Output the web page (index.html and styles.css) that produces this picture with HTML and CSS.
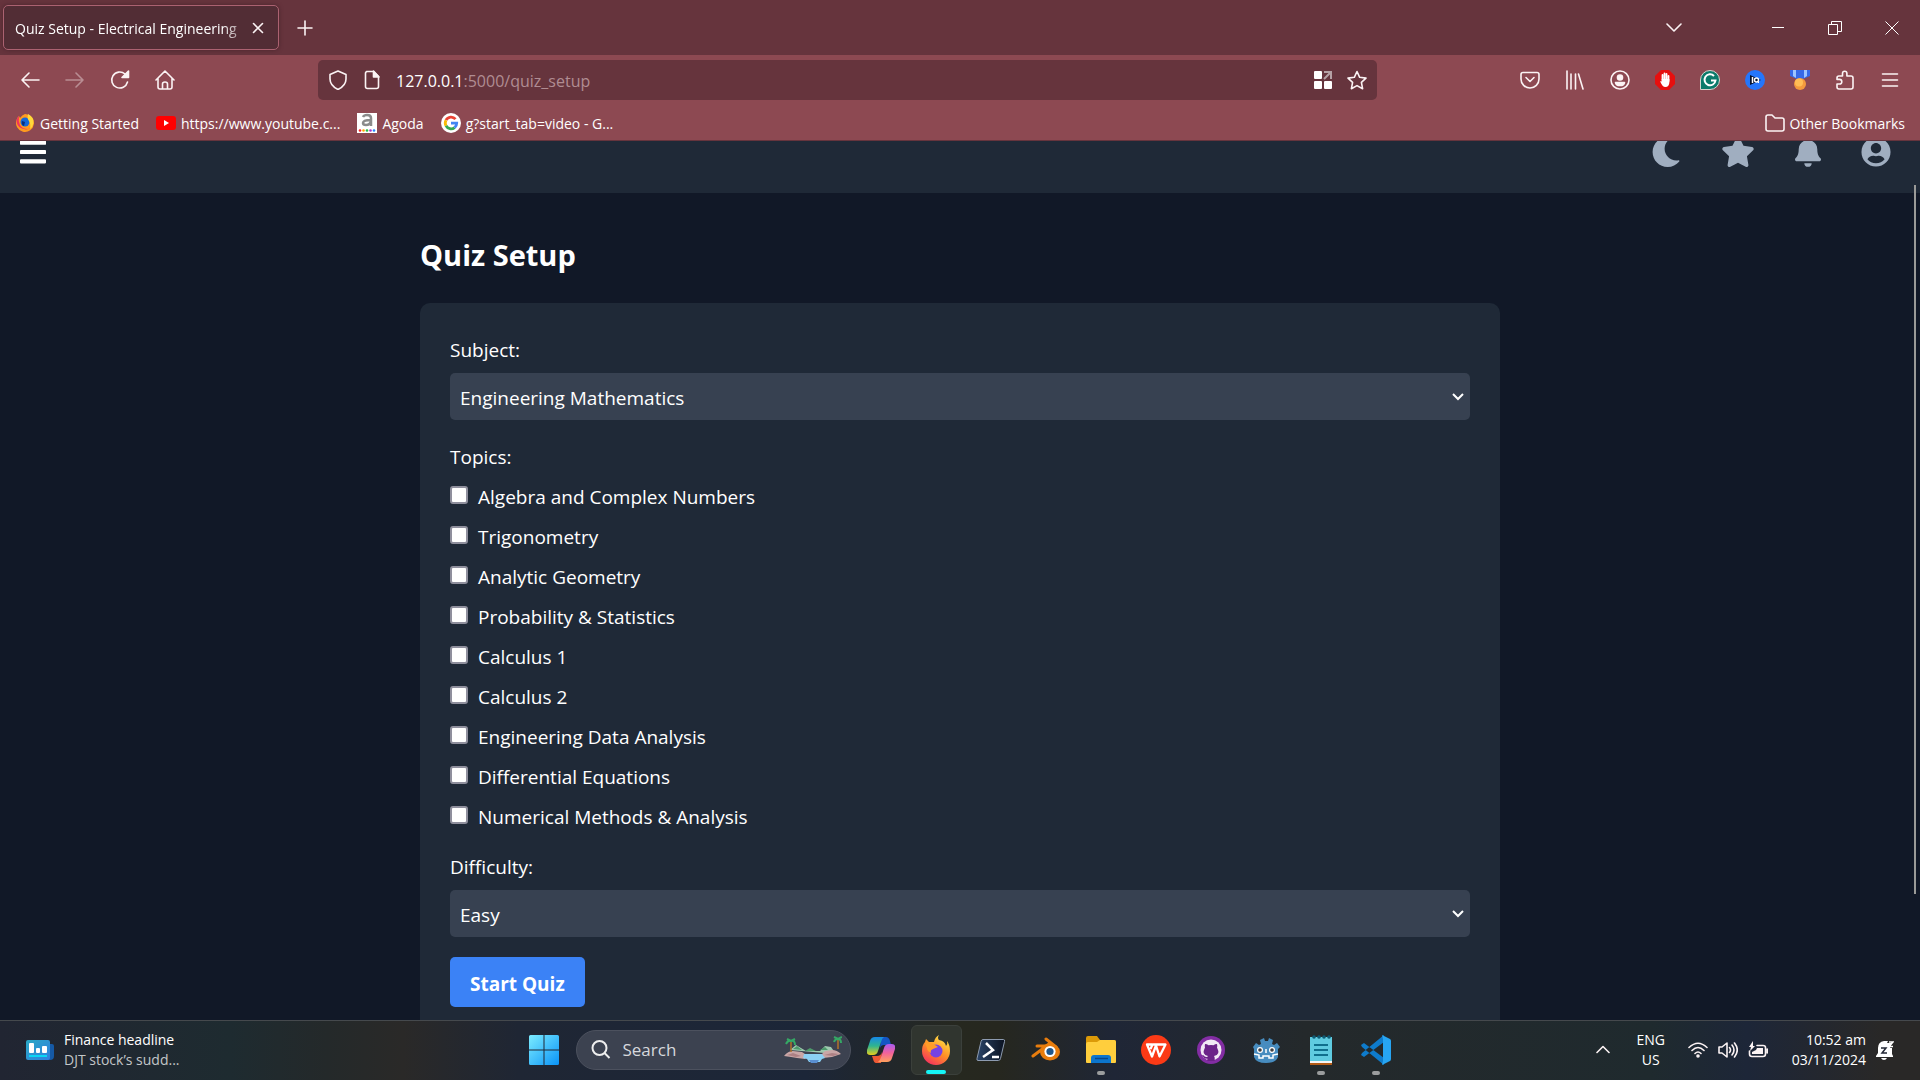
FILE: index.html
```html
<!DOCTYPE html>
<html lang="en">
<head>
<meta charset="utf-8">
<title>Quiz Setup - Electrical Engineering</title>
<link rel="stylesheet" href="styles.css">
</head>
<body>
<div class="desktop">
  <header class="browser">
    <div class="tabstrip">
      <div class="tab">
        <span class="tab-title">Quiz Setup - Electrical Engineering</span>
        <button class="tab-close" aria-label="Close tab"><svg class="line" width="12" height="12" viewBox="0 0 12 12"><path d="M1.500 1.500l9 9M10.500 1.500l-9 9"/></svg></button>
      </div>
      <button class="newtab" aria-label="New tab"><svg class="line" width="16" height="16" viewBox="0 0 16 16"><path d="M8 1v14M1 8h14"/></svg></button>
      <div class="window-controls">
        <button class="list-tabs" aria-label="List all tabs"><svg class="line" width="18" height="10" viewBox="0 0 18 10"><path d="M2 1l7 7 7-7"/></svg></button>
        <button aria-label="Minimize"><svg class="hair" width="14" height="14" viewBox="0 0 14 14"><path d="M1 6.5h12"/></svg></button>
        <button aria-label="Restore"><svg class="hair" width="14" height="14" viewBox="0 0 14 14"><path d="M.5 3.500h9v10h-9zM3.500 3.500v-3h10v10h-4"/></svg></button>
        <button aria-label="Close window"><svg class="hair" width="14" height="14" viewBox="0 0 14 14"><path d="M.5.5l13 13M13.500.5l-13 13"/></svg></button>
      </div>
    </div>
    <div class="toolbar">
      <nav class="tools">
        <button aria-label="Back"><svg class="line" width="20" height="20" viewBox="0 0 20 20"><path d="M19 10H2M9 3l-7 7 7 7"/></svg></button>
        <button aria-label="Forward" disabled><svg class="line" width="20" height="20" viewBox="0 0 20 20"><path d="M1 10h17M11 3l7 7-7 7"/></svg></button>
        <button aria-label="Reload"><svg class="line" width="20" height="20" viewBox="0 0 20 20"><path d="M17.500 12a8 8 0 1 1-2.500-8"/><path class="solid" d="M18.500 1v6.500H12z"/></svg></button>
        <button aria-label="Home"><svg class="line" width="20" height="20" viewBox="0 0 20 20"><path d="M1 10l9-9 9 9M3 8.500V17q0 2 2 2h10q2 0 2-2V8.500M7.500 18.500V14q0-2 2.500-2t2.500 2v4.500"/></svg></button>
      </nav>
      <div class="urlbar">
        <svg class="line" width="20" height="20" viewBox="0 0 20 20"><path d="M10 1l8 3.500V9c0 5-3 8-8 10.500C5 17 2 14 2 9V4.500z"/></svg>
        <svg class="line" width="20" height="20" viewBox="0 0 20 20"><path d="M4.500 1.500h7l5 5v10q0 2-2 2h-9q-2 0-2-2v-13q0-2 2-2z"/><path class="solid" d="M11.500 1v6H17z"/></svg>
        <div class="url"><b>127.0.0.1</b>:5000/quiz_setup</div>
        <svg width="20" height="20" viewBox="0 0 20 20" fill="#fff"><rect x="1" y="1" width="8" height="8" rx="1"/><rect x="1" y="11" width="8" height="8" rx="1"/><rect x="11" y="11" width="8" height="8" rx="1"/><path fill="none" stroke="#b5a0a4" stroke-width="2" d="M11 2h7v7M18 2l-7 7"/></svg>
        <svg class="line" width="20" height="20" viewBox="0 0 20 20"><path d="M10 1.500l2.700 5.800 6.300.8-4.600 4.300 1.200 6.300-5.600-3.100-5.600 3.100 1.200-6.300L1 8.100l6.300-.8z"/></svg>
      </div>
      <div class="tools">
        <button aria-label="Save to Pocket"><svg class="line" width="20" height="20" viewBox="0 0 20 20"><path d="M3 2.500h14q2 0 2 2V9a9 9 0 0 1-18 0V4.500q0-2 2-2z"/><path d="M6 7.500l4 4 4-4"/></svg></button>
        <button aria-label="Library"><svg class="line" width="20" height="20" viewBox="0 0 20 20"><path d="M2 1v18M6 4v15M10.500 4v15M13.500 4l4.500 15"/></svg></button>
        <button aria-label="Account"><svg class="line" width="20" height="20" viewBox="0 0 20 20"><circle cx="10" cy="10" r="9"/><circle class="solid" cx="10" cy="7.500" r="2.500"/><path class="solid" d="M5.500 12.500h9q-.5 3-4.500 3t-4.500-3z"/></svg></button>
        <button aria-label="Ad blocker"><svg width="20" height="20" viewBox="0 0 20 20"><path fill="#e60f0f" d="M6 0h8l6 6v8l-6 6H6l-6-6V6z"/><path d="M7.500 11V5M9.500 10V3.500M11.500 10V4M13.500 11V6" stroke="#fff" stroke-width="1.800" stroke-linecap="round"/><path fill="#fff" d="M6.600 9h7.800v3c0 3-1.500 5-4 5-2.200 0-3.500-1.500-5.200-5.500q1-1 2 .5z"/></svg></button>
        <button aria-label="Grammar checker"><svg width="20" height="20" viewBox="0 0 20 20"><path fill="#0b7a6b" stroke="#d5d5cf" d="M.5 19.500V10A9.500 9.500 0 1 1 10 19.500z"/><path fill="none" stroke="#fff" stroke-width="2" d="M14 6a5.500 5.500 0 1 0 1.500 4.500H11"/></svg></button>
        <button aria-label="IQ"><svg width="20" height="20" viewBox="0 0 20 20"><circle cx="10" cy="10" r="10" fill="#2476fb"/><path fill="#07122b" d="M5 5l11 5-11 5z"/><path stroke="#fff" stroke-width="1.500" fill="none" d="M7.500 7v6"/><circle cx="11.500" cy="10" r="2" fill="#07122b" stroke="#fff" stroke-width="1.500"/><path d="M12 11l2 2" stroke="#fff"/></svg></button>
        <button aria-label="Rewards"><svg width="20" height="20" viewBox="0 0 20 20"><path fill="#3769e7" d="M0 0h20v6l-7 3H7L0 6z"/><path fill="#9dc4ff" d="M3 0h3v8L3 6zM14 0h3v6l-3 2z"/><circle cx="10" cy="14" r="6" fill="#f49a3d"/><circle cx="9" cy="12.500" r="4" fill="#ffbd55"/></svg></button>
        <button aria-label="Extensions"><svg class="line" width="20" height="20" viewBox="0 0 20 20"><path d="M7.500 6V3.500a2.200 2.200 0 0 1 4.400 0V6H16q2 0 2 2v9q0 2-2 2H4q-2 0-2-2v-3h2.500a2.300 2.300 0 0 0 0-4.600H2V8q0-2 2-2z"/></svg></button>
        <button aria-label="Menu"><svg class="line" width="20" height="20" viewBox="0 0 20 20"><path d="M2.500 4h15M2.500 10h15M2.500 16h15"/></svg></button>
      </div>
    </div>
    <nav class="bookmarks">
      <a href="#"><svg width="20" height="20" viewBox="0 0 20 20"><path fill="#ff9a1f" d="M10 1a9 9 0 1 1-8.500 6q1-3 2.500-4l1 2q2-3 5-4z"/><path fill="#f0345e" d="M1.500 7q1-3 2.500-4-1 5 1 9t8 4q2-.5 4-2.500A9 9 0 0 1 1.500 7z"/><circle cx="10" cy="9" r="4.500" fill="#1367d8"/><path fill="#ffd93b" d="M13 1q6 3 5.500 9-.5 4-3.500 6 1-5-1-8-2-2-1-7z"/><path fill="#0a2d7c" d="M7 8l3 1-1 4q-3-1-2-5z"/></svg><span>Getting Started</span></a>
      <a href="#"><svg width="20" height="20" viewBox="0 0 20 20"><rect y="3" width="20" height="14" rx="3" fill="#f00"/><path fill="#fff" d="M8 7l5 3-5 3z"/></svg><span>https://www.youtube.c...</span></a>
      <a href="#"><svg width="20" height="20" viewBox="0 0 20 20"><path fill="#fff" d="M0 0h20v20H0z"/><path fill="none" stroke="#8b8b8b" stroke-width="2.500" d="M6 4q1-2 4-2 4 0 4 3v8M14 7q-8 0-8 3 0 2 3 2 4 0 5-4"/><g><circle cx="3" cy="17.500" r="1.300" fill="#f22"/><circle cx="6.500" cy="17.500" r="1.300" fill="#fa0"/><circle cx="10" cy="17.500" r="1.300" fill="#2b4"/><circle cx="13.500" cy="17.500" r="1.300" fill="#a3c"/><circle cx="17" cy="17.500" r="1.300" fill="#28f"/></g></svg><span>Agoda</span></a>
      <a href="#"><svg width="20" height="20" viewBox="0 0 20 20"><circle cx="10" cy="10" r="10" fill="#fff"/><g fill="none" stroke-width="2.800"><path stroke="#ea4335" d="M14.500 6.200A5.800 5.800 0 0 0 5 7.200"/><path stroke="#fbbc05" d="M5 7.200a5.800 5.800 0 0 0 0 5.600"/><path stroke="#34a853" d="M5 12.800a5.800 5.800 0 0 0 8.600 1.800"/><path stroke="#4285f4" d="M13.600 14.600A5.800 5.800 0 0 0 15.700 10.200H10"/></g></svg><span>g?start_tab=video - G...</span></a>
      <a href="#" class="other"><svg class="line" width="20" height="20" viewBox="0 0 20 20"><path d="M1 4q0-2 2-2h4l3 3h7q2 0 2 2v9q0 2-2 2H3q-2 0-2-2z"/></svg><span>Other Bookmarks</span></a>
    </nav>
  </header>

  <div class="page">
    <header class="site-header">
      <button aria-label="Open menu"><svg width="26" height="30" viewBox="0 0 448 512" fill="#fff"><path d="M16 132h416c9 0 16-7 16-16V76c0-9-7-16-16-16H16C7 60 0 67 0 76v40c0 9 7 16 16 16zm0 160h416c9 0 16-7 16-16v-40c0-9-7-16-16-16H16c-9 0-16 7-16 16v40c0 9 7 16 16 16zm0 160h416c9 0 16-7 16-16v-40c0-9-7-16-16-16H16c-9 0-16 7-16 16v40c0 9 7 16 16 16z"/></svg></button>
      <nav class="site-icons">
        <button aria-label="Dark mode"><svg width="30" height="30" viewBox="0 0 512 512"><path d="M283.211 512c78.962 0 151.079-35.925 198.857-94.792 7.068-8.708-.639-21.430-11.562-19.350-124.203 23.654-238.262-71.576-238.262-196.954 0-72.222 38.662-138.635 101.498-174.394 9.686-5.512 7.250-20.197-3.756-22.230A258.156 258.156 0 0 0 283.211 0c-141.309 0-256 114.511-256 256 0 141.309 114.511 256 256 256z"/></svg></button>
        <button aria-label="Favorites"><svg width="34" height="30" viewBox="0 0 576 512"><path d="M259.300 17.800L194 150.200 47.900 171.500c-26.200 3.800-36.700 36.100-17.700 54.600l105.700 103-25 145.500c-4.500 26.300 23.200 46 46.400 33.700L288 439.600l130.700 68.700c23.200 12.200 50.900-7.400 46.400-33.700l-25-145.500 105.700-103c19-18.500 8.500-50.800-17.700-54.600L382 150.200 316.700 17.800c-11.700-23.600-45.600-23.900-57.400 0z"/></svg></button>
        <button aria-label="Notifications"><svg width="26" height="30" viewBox="0 0 448 512"><path d="M224 512c35.320 0 63.970-28.650 63.970-64H160.030c0 35.350 28.650 64 63.970 64zm215.390-149.710c-19.320-20.760-55.470-51.990-55.470-154.290 0-77.700-54.480-139.900-127.940-155.160V32c0-17.670-14.320-32-31.980-32s-31.980 14.330-31.980 32v20.840C118.560 68.100 64.080 130.300 64.080 208c0 102.300-36.150 133.530-55.470 154.290-6 6.450-8.660 14.160-8.610 21.710.11 16.400 12.980 32 32.100 32h383.800c19.120 0 32-15.600 32.100-32 .05-7.550-2.610-15.270-8.610-21.710z"/></svg></button>
        <button aria-label="Profile"><svg width="30" height="30" viewBox="0 0 496 512"><path d="M248 8C111 8 0 119 0 256s111 248 248 248 248-111 248-248S385 8 248 8zm0 96c48.600 0 88 39.400 88 88s-39.400 88-88 88-88-39.400-88-88 39.400-88 88-88zm0 344c-58.700 0-111.300-26.600-146.500-68.200 18.800-35.400 55.600-59.800 98.500-59.800 2.400 0 4.800.4 7.100 1.100 13 4.200 26.600 6.900 40.900 6.900 14.300 0 28-2.700 40.900-6.900 2.300-.7 4.700-1.100 7.100-1.100 42.900 0 79.700 24.400 98.500 59.800C359.300 421.400 306.700 448 248 448z"/></svg></button>
      </nav>
    </header>
    <main class="content">
      <h1>Quiz Setup</h1>
      <form class="card">
        <label class="field-label" for="subject">Subject:</label>
        <div class="select"><select id="subject"><option>Engineering Mathematics</option></select><svg width="12" height="8" viewBox="0 0 12 8"><path d="M1 1l5 5 5-5"/></svg></div>
        <fieldset>
          <legend class="field-label">Topics:</legend>
          <label class="topic"><input type="checkbox"><span>Algebra and Complex Numbers</span></label>
          <label class="topic"><input type="checkbox"><span>Trigonometry</span></label>
          <label class="topic"><input type="checkbox"><span>Analytic Geometry</span></label>
          <label class="topic"><input type="checkbox"><span>Probability &amp; Statistics</span></label>
          <label class="topic"><input type="checkbox"><span>Calculus 1</span></label>
          <label class="topic"><input type="checkbox"><span>Calculus 2</span></label>
          <label class="topic"><input type="checkbox"><span>Engineering Data Analysis</span></label>
          <label class="topic"><input type="checkbox"><span>Differential Equations</span></label>
          <label class="topic"><input type="checkbox"><span>Numerical Methods &amp; Analysis</span></label>
        </fieldset>
        <label class="field-label" for="difficulty">Difficulty:</label>
        <div class="select"><select id="difficulty"><option>Easy</option></select><svg width="12" height="8" viewBox="0 0 12 8"><path d="M1 1l5 5 5-5"/></svg></div>
        <button class="start" type="button">Start Quiz</button>
      </form>
    </main>
    <div class="scroll-thumb"></div>
  </div>

  <footer class="taskbar">
    <a class="widget" href="#">
      <svg width="28" height="22" viewBox="0 0 28 22"><defs><linearGradient id="fin" x2="1" y2="1"><stop stop-color="#2aa9c4"/><stop offset="1" stop-color="#2f7fe0"/></linearGradient></defs><path fill="#1559a5" d="M20 5h6q2 0 2 2v10q0 4-4 4h-4z"/><rect y="1" width="24" height="20" rx="2" fill="url(#fin)"/><g fill="#fff"><rect x="3" y="4" width="5" height="10" rx="1"/><rect x="10" y="9" width="4" height="5" rx="1"/><rect x="16" y="7" width="5" height="7" rx="1"/></g><path fill="#0ad7f5" d="M3 16h18v2H3z"/></svg>
      <span class="widget-text"><span>Finance headline</span><span class="dim">DJT stock’s sudd...</span></span>
    </a>
    <div class="apps">
      <button class="app" aria-label="Start"><svg width="30" height="30" viewBox="0 0 30 30"><defs><linearGradient id="win" x2="1" y2="1"><stop stop-color="#7cecff"/><stop offset="1" stop-color="#0a93f7"/></linearGradient></defs><path fill="url(#win)" d="M0 1.500Q0 0 1.500 0h13v14.500H0zM15.500 0h13Q30 0 30 1.500v13H15.500zM0 15.500h14.500V30h-13Q0 30 0 28.500zM15.500 15.500H30v13q0 1.500-1.500 1.500h-13z"/></svg></button>
      <button class="search">
        <svg width="20" height="20" viewBox="0 0 20 20" fill="none" stroke="#eee" stroke-width="2"><circle cx="8.500" cy="8" r="7"/><path d="M13.500 13l5 5"/></svg>
        <span>Search</span>
        <svg class="island" width="58" height="28" viewBox="0 0 58 28"><path fill="#9fc9b0" d="M6 14l6-5 5 3 5 3h14l5-5 6 1 5 7z"/><path fill="#4d9a6b" d="M9 13l4-3 5 4zM21 15l5-3 6 3zM36 14l5-3 3 3z"/><path fill="#c9a6a6" d="M0 20q4-5 9-5l9 1 6 4-3 3-8-1-6-1zM57 18q-4-4-9-4l-7 1-5 5 3 2 9-1z"/><path fill="#ad8084" d="M3 19l6-2 8 3-5 1zM40 19l8-2 7 1-6 2z"/><path fill="#8bd0f4" d="M20 18h18l3 4-3 1-2 3H25l-2-3-4-1z"/><path fill="#5a8fd0" d="M25 24h10l-2 3h-6z"/><path d="M7 16V6M54 13V4" stroke="#b17328" stroke-width="1.500"/><g fill="none" stroke="#35a865" stroke-width="2"><path d="M2 8q2-4 5-3 4-1 4 4M3 3l4 2 4-2M50 6q1-3 4-3 3 0 3 4M50 1l4 2 4-2"/></g></svg>
      </button>
      <button class="app" aria-label="Copilot"><svg width="28" height="28" viewBox="0 0 28 28"><defs><linearGradient id="cp1" x2="0" y2="1"><stop stop-color="#1688e8"/><stop offset=".5" stop-color="#2fb58e"/><stop offset="1" stop-color="#e7d01c"/></linearGradient><linearGradient id="cp2" x2="0" y2="1"><stop stop-color="#a95cf2"/><stop offset=".5" stop-color="#f2629b"/><stop offset="1" stop-color="#ffa05c"/></linearGradient></defs><path fill="#1456c4" d="M14 1h5q3 0 4 4l1 4h-7q-3 0-4 3z"/><path fill="url(#cp1)" d="M8 1h9q-2 1-3 5l-3 9q-1 4-5 4H3q-4 0-3-5l3-9q1-4 5-4z"/><path fill="#ee5a35" d="M14 27H9q-2 0-3-4l-1-3h5q4 0 5-4z"/><path fill="url(#cp2)" d="M20 26h-9q2-1 3-5l3-9q1-4 5-4h3q4 0 3 5l-3 9q-1 4-5 4z"/></svg></button>
      <button class="app active" aria-label="Firefox"><svg width="30" height="30" viewBox="0 0 30 30"><defs><linearGradient id="fx" x1=".8" x2=".2" y2="1"><stop stop-color="#ffe94a"/><stop offset=".5" stop-color="#ff9125"/><stop offset="1" stop-color="#f52a62"/></linearGradient></defs><path fill="url(#fx)" d="M18 0q-2 3 0 5 6 1 7 6 2-2 1-5 3 4 3 10a14 14 0 1 1-28 0Q1 10 4 7l1-3 3 3h5q1-5 5-7z"/><circle cx="15" cy="16" r="6.500" fill="#7542e5"/><path fill="#ff9c28" d="M4 8l4 0 6 2 3 2-5 2q-3 1-2 4-4-2-4-5z"/></svg></button>
      <button class="app" aria-label="PowerShell"><svg width="30" height="24" viewBox="0 0 30 24"><defs><linearGradient id="ps" x2="1"><stop stop-color="#2b4569"/><stop offset="1" stop-color="#0b1220"/></linearGradient></defs><path fill="url(#ps)" stroke="#8d9bb0" d="M7 1.500h20.500q1.500 0 1 2l-4 17q-.5 2-2 2H2q-1.500 0-1-2l4-17q.5-2 2-2z"/><path fill="none" stroke="#fff" stroke-width="2.500" d="M10 5l7 7-10 7M16 19h7"/></svg></button>
      <button class="app" aria-label="Blender"><svg width="30" height="26" viewBox="0 0 30 26"><path fill="none" stroke="#e87d0d" stroke-width="3" stroke-linecap="round" d="M6 9h12M2 19L18 7M15 2l10 8"/><ellipse cx="19" cy="15" rx="10" ry="8.500" fill="#e87d0d"/><circle cx="19" cy="14.500" r="5.600" fill="#fff"/><circle cx="19" cy="14.500" r="3.600" fill="#1d568c"/></svg></button>
      <button class="app running" aria-label="File Explorer"><svg width="30" height="28" viewBox="0 0 30 28"><path fill="#dc9a08" d="M0 2q0-2 2-2h9l3 4h14q2 0 2 2v6H0z"/><path fill="#ffce3d" d="M0 8q0-2 2-2h9l3-2h14q2 0 2 2v20q0 1-1 1H1q-1 0-1-1z"/><path fill="#0c75cd" d="M5 27v-5q0-3 3-3h14q3 0 3 3v5z"/><path stroke="#07468a" stroke-width="1.500" d="M9 22.500h13"/></svg></button>
      <button class="app" aria-label="WPS Office"><svg width="30" height="30" viewBox="0 0 30 30"><circle cx="15" cy="15" r="15" fill="#fb3a16"/><path fill="none" stroke="#fff" stroke-width="2.300" stroke-linejoin="round" d="M11 9.500H6l5 12 4-11 3.500 11 6-12H15.500M9.500 14l2-4.500h4"/></svg></button>
      <button class="app" aria-label="GitHub Desktop"><svg width="28" height="28" viewBox="0 0 28 28"><circle cx="14" cy="14" r="14" fill="#832da4"/><circle cx="14" cy="14" r="10.500" fill="#f2e9f5"/><path fill="#6c2389" d="M8 8q2 0 3.500 1.300 2.500-.5 5 0Q18 8 20 8q.6 2 0 3.500 4 7.500-3 8.500.7 1 .7 2v3h-7.400v-2.500q-3.500.7-4.500-2.300l-1.300-1 2 0q1.500 2.500 3.900 1.500L11 20q-7-1-3-8.500Q7.500 10 8 8z"/></svg></button>
      <button class="app" aria-label="Godot"><svg width="28" height="28" viewBox="0 0 28 28"><path fill="#478cbf" d="M1 11l3-4 3 2 2-1-1-4 4-2 1 3h3l1-3 4 2-1 4 2 1 3-2 3 4-2 2v8q-2 6-12 6T2 21v-8z"/><circle cx="8" cy="14" r="3" fill="#fff"/><circle cx="20" cy="14" r="3" fill="#fff"/><circle cx="8" cy="14" r="1.800" fill="#414042"/><circle cx="20" cy="14" r="1.800" fill="#414042"/><path fill="none" stroke="#fff" stroke-width="1.500" d="M14 13v4M2 18l5 1v3h4v-2h6v2h4v-3l5-1"/></svg></button>
      <button class="app running" aria-label="Notepad"><svg width="22" height="30" viewBox="0 0 22 30"><path fill="#5fcbe0" d="M0 2h22v24H0z"/><path fill="#f5f5f5" d="M0 26h22v2H0z"/><path fill="#b35b16" d="M0 28h22v2H0z"/><g fill="#0e5a73"><circle cx="4" cy="2" r="1.800"/><circle cx="9" cy="2" r="1.800"/><circle cx="14" cy="2" r="1.800"/><circle cx="19" cy="2" r="1.800"/></g><path stroke="#0f6f8c" stroke-width="2" d="M4 10h14M4 15h14M4 20h14"/></svg></button>
      <button class="app running" aria-label="Visual Studio Code"><svg width="30" height="30" viewBox="0 0 30 30"><path fill="#0e7bcb" d="M0 10l3-2 20 15v7L1 12zM0 20l3 2L23 7V0L1 18z"/><path fill="#27a5f2" d="M21 0l8 4q1 .5 1 2v18q0 1.500-1 2l-8 4 1-4V4z"/></svg></button>
    </div>
    <div class="tray">
      <svg class="line" width="14" height="9" viewBox="0 0 14 9"><path d="M1 7.500l6-6 6 6"/></svg>
      <div class="lang"><span>ENG</span><span>US</span></div>
      <div class="status">
        <svg class="line" width="20" height="18" viewBox="0 0 20 18"><path d="M1 6.500q9-8.500 18 0M4 9.500q6-6 12 0M7 12.500q3-3 6 0"/><circle class="solid" cx="10" cy="15" r="1"/></svg>
        <svg class="line" width="20" height="18" viewBox="0 0 20 18"><path d="M1 6h3l5-4v14l-5-4H1zM11.500 6.500q2 2.500 0 5M14 4q4 5 0 10M16.500 2q5.500 7 0 14"/></svg>
        <svg class="line" width="20" height="18" viewBox="0 0 20 18"><path d="M9 4.500h6q2.500 0 2.500 2V13q0 2.500-2.500 2.500H4q-2.500 0-2.500-2.500v-3M19.200 8v4"/><path fill="#fbf3f4" stroke="none" d="M9 7h6v6H4v-2l4-2z"/><path fill="#fbf3f4" stroke="none" d="M5 0L1 6h2L2 10l5-5H5z"/></svg>
      </div>
      <div class="clock"><span>10:52 am</span><span>03/11/2024</span></div>
      <svg width="18" height="20" viewBox="0 0 18 20"><path fill="#fff" d="M8 1h4l-1 2h5L14 8h2v6l1 2v1H0v-1l2-3V8q0-6 6-7zM5 18h6q-1 2-3 2t-3-2z"/><path fill="none" stroke="#222735" stroke-width="1.500" d="M5 8h5l-4 5h5"/><path fill="none" stroke="#fff" stroke-width="1.500" d="M13 2h4l-4 4.500h4"/></svg>
    </div>
  </footer>
</div>
</body>
</html>
```
FILE: styles.css
```css
* { box-sizing: border-box; }

body {
  margin: 0;
  font-family: "Open Sans", "Noto Sans", sans-serif;
  color: #fff;
  background: #111827;
}

button {
  display: flex;
  align-items: center;
  justify-content: center;
  margin: 0;
  padding: 0;
  border: 0;
  background: none;
  color: inherit;
  font: inherit;
}

a { color: inherit; text-decoration: none; }
svg { display: block; flex: none; }

.line { fill: none; stroke: #fbf3f4; stroke-width: 1.6; stroke-linecap: round; stroke-linejoin: round; }
.line .solid { fill: #fbf3f4; }
.hair { fill: none; stroke: #fff; stroke-width: 1; }

.desktop { display: flex; flex-direction: column; height: 100vh; overflow: hidden; }

/* Browser window */
.browser { flex: none; background: #8d4952; border-bottom: 1px solid #66343d; font-size: 14px; }
.tabstrip { display: flex; align-items: center; height: 55px; padding-left: 3px; background: #66343d; }
.tab {
  display: flex;
  align-items: center;
  justify-content: space-between;
  width: 276px;
  height: 45px;
  padding: 0 14px 0 11px;
  border: 1px solid #ab6271;
  border-radius: 5px;
  background: #522d35;
  box-shadow: 0 0 4px #4a252d;
}
.tab-title {
  width: 230px;
  padding-top: 2px;
  overflow: hidden;
  white-space: nowrap;
  mask-image: linear-gradient(to right, #000 90%, transparent 104%);
}
.newtab { width: 52px; height: 45px; }
.window-controls { display: flex; margin-left: auto; }
.window-controls button { width: 57px; height: 55px; }
.window-controls .list-tabs { margin-right: 47px; }

.toolbar { display: flex; align-items: center; height: 50px; padding: 0 8px 0 7px; }
.tools { display: flex; }
.tools button { width: 45px; height: 40px; }
.tools button:disabled { opacity: .4; }
.urlbar {
  display: flex;
  flex: 1;
  align-items: center;
  gap: 14px;
  height: 40px;
  margin: 0 130px 0 131px;
  padding: 0 10px;
  border-radius: 5px;
  background: #66343d;
}
.url { flex: 1; padding-top: 2px; font-size: 16px; color: #b08c92; }
.url b { font-weight: 400; color: #fff; }

.bookmarks { display: flex; gap: 17px; height: 35px; padding: 0 15px; }
.bookmarks a { display: flex; align-items: center; gap: 5px; }
.bookmarks span { padding-top: 2px; }
.bookmarks .other { margin-left: auto; }

/* Quiz page */
.page { position: relative; flex: 1; min-height: 0; overflow: hidden; }
.site-header {
  display: flex;
  align-items: flex-end;
  justify-content: space-between;
  height: 52px;
  padding: 0 29px 26px 20px;
  background: #1f2937;
}
.site-icons { display: flex; gap: 40px; fill: #a0aec0; }

.content { max-width: 1120px; margin: 0 auto; padding: 42px 20px; font-size: 19px; line-height: 26px; }
h1 { margin: 0 0 28px; font-size: 29px; font-weight: 700; line-height: 40px; }
.card { padding: 30px; border-radius: 10px; background: #1f2937; }
.field-label { display: block; margin-bottom: 10px; padding: 4px 0 0; }
.select { display: grid; align-items: center; margin-bottom: 20px; }
.select > * { grid-area: 1 / 1; }
.select select {
  width: 100%;
  height: 47px;
  padding: 2px 10px 0;
  border: 0;
  border-radius: 5px;
  appearance: none;
  background: #374151;
  color: #fff;
  font: inherit;
}
.select svg { justify-self: end; margin-right: 6px; fill: none; stroke: #fff; stroke-width: 2; pointer-events: none; }
fieldset { margin: 0 0 20px; padding: 0; border: 0; }
.topic { display: flex; align-items: center; gap: 10px; }
.topic span { padding-top: 4px; }
.topic + .topic { margin-top: 10px; }
.topic input {
  width: 18px;
  height: 18px;
  margin: 0;
  border: 2px solid #8f8f9d;
  border-radius: 3px;
  appearance: none;
  background: #fff;
}
.start { height: 50px; padding: 4px 20px 0; border-radius: 5px; background: #3b82f6; font-weight: 700; }
.scroll-thumb { position: absolute; top: 5%; right: 4px; bottom: 126px; width: 2px; background: #9a9a98; }

/* Taskbar */
.taskbar {
  display: grid;
  grid-template-columns: 1fr auto 1fr;
  align-items: center;
  flex: none;
  height: 60px;
  padding-bottom: 2px;
  border-top: 1px solid #45494d;
  background: linear-gradient(to right, #212532 0, #1e2b30 12%, #24292a 17%, #2a2928 21%, #1f2634 27%, #1c2638 42%, #26281f 50%, #26271f 52%, #1f2636 58%, #24292b 68%, #1f2a2e 86%, #1d2638 91%, #292827 98%);
  font-size: 14px;
  line-height: 20px;
}
.widget { display: flex; align-items: center; gap: 10px; padding-left: 26px; }
.widget-text, .lang, .clock { display: flex; flex-direction: column; }
.dim { color: #c3c6c8; }
.apps { display: flex; align-items: center; }
.app { position: relative; width: 55px; height: 50px; }
.app.active { width: 51px; margin: 0 2px; border: 1px solid #3b403b; border-radius: 6px; background: #30352f; }
.app.active::after, .app.running::after {
  content: "";
  position: absolute;
  bottom: 0;
  left: 50%;
  width: 8px;
  height: 4px;
  border-radius: 2px;
  background: #9b9d9e;
  transform: translateX(-50%);
}
.app.active::after { width: 20px; background: #15f5f5; }
.search {
  justify-content: flex-start;
  gap: 12px;
  width: 275px;
  height: 40px;
  margin: 0 3px 0 4px;
  padding: 0 8px 0 14px;
  border: 1px solid #4c515e;
  border-radius: 20px;
  background: #3c4250;
  color: #d6d8dc;
  font-size: 17px;
}
.island { margin-left: auto; }
.tray { display: flex; align-items: center; justify-content: flex-end; padding-right: 26px; }
.lang { align-items: center; margin: 0 23px 0 27px; }
.status { display: flex; gap: 10px; }
.clock { align-items: flex-end; min-width: 78px; margin: 0 10px 0 20px; }
```
